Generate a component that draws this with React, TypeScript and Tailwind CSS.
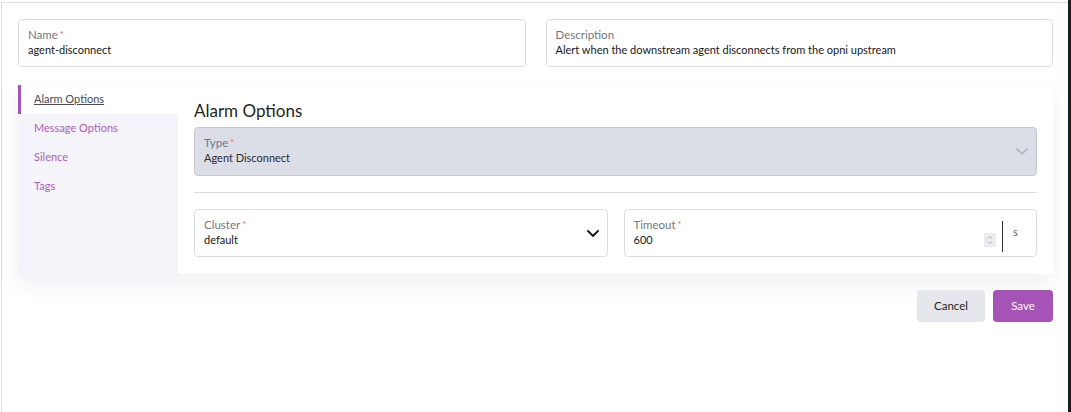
import { FC } from "react";

const Label: FC<{ text: string; required?: boolean; muted?: boolean }> = ({ text, required, muted }) => (
  <div className={`text-[11.5px] leading-[14px] ${muted ? "text-[#707491]" : "text-[#75757f]"}`}>
    {text}
    {required && <span className="text-[#f05a5a] ml-[2px] text-[9px] align-top">*</span>}
  </div>
);

const Chevron: FC<{ className: string; w?: number }> = ({ className, w = 12 }) => (
  <svg width={w} height="7" viewBox="0 0 12 7" className={className} fill="none">
    <path d="M1 1 6 6 11 1" stroke="currentColor" strokeWidth="1.8" strokeLinecap="round" />
  </svg>
);

const tabs = ["Alarm Options", "Message Options", "Silence", "Tags"];

const App: FC = () => {
  return (
    <div className="flex h-[412px] w-full bg-white font-[family-name:Lato,sans-serif] text-[#17171c]">
      <div className="flex-1 mt-[2px] ml-[1px] border-l border-t border-[#dcdee7] pl-4 pr-[15px] pt-4">
        <div className="grid grid-cols-2 gap-5">
          <div className="h-[48px] rounded border border-[#dcdee7] px-[9px] pt-[8px]">
            <Label text="Name" required />
            <div className="text-[11px] leading-[16px]">agent-disconnect</div>
          </div>
          <div className="h-[48px] rounded border border-[#dcdee7] px-[9px] pt-[8px]">
            <Label text="Description" />
            <div className="text-[11px] leading-[16px]">Alert when the downstream agent disconnects from the opni upstream</div>
          </div>
        </div>

        <div className="mt-[18px] flex h-[189px] shadow-[0_10px_22px_rgba(40,40,80,0.07)]">
          <div className="w-[160px] bg-[#f4f4fa]">
            {tabs.map((t, i) =>
              i === 0 ? (
                <div key={t} className="flex h-[29px] items-center border-l-[3px] border-[#a553b7] bg-white pl-[13px] text-[11px] text-[#4a4a55] underline">
                  {t}
                </div>
              ) : (
                <div key={t} className="flex h-[29px] items-center pl-4 text-[11px] text-[#b05cc2]">
                  {t}
                </div>
              )
            )}
          </div>
          <div className="flex-1 bg-white px-4 pt-[14px]">
            <h2 className="text-[17px] leading-[23px] text-[#1f1f24]">Alarm Options</h2>
            <div className="mt-[5px] flex h-[49px] items-center rounded border border-[#c6c8d6] bg-[#dcdee7] pl-[9px] pr-[8px]">
              <div className="flex-1 self-start pt-[8px]">
                <Label text="Type" required muted />
                <div className="text-[11px] leading-[16px] text-[#2b2b33]">Agent Disconnect</div>
              </div>
              <Chevron className="text-[#b4b7c8]" />
            </div>
            <div className="mt-4 h-px bg-[#dcdee7]" />
            <div className="mt-4 grid grid-cols-2 gap-4">
              <div className="flex h-[48px] items-center rounded border border-[#dcdee7] pl-[9px] pr-[8px]">
                <div className="flex-1 self-start pt-[8px]">
                  <Label text="Cluster" required />
                  <div className="text-[11px] leading-[16px]">default</div>
                </div>
                <Chevron className="text-[#111]" />
              </div>
              <div className="flex h-[48px] items-center rounded border border-[#dcdee7] pl-[9px]">
                <div className="flex-1 self-start pt-[8px]">
                  <Label text="Timeout" required />
                  <div className="text-[11px] leading-[16px]">600</div>
                </div>
                <div className="mt-[14px] mr-[6px] flex h-[14px] w-[12px] items-center justify-center rounded-[1px] bg-[#ececf0]">
                  <svg width="6" height="10" viewBox="0 0 6 10" fill="none">
                    <path d="M1 3.5 3 1.5 5 3.5M1 6.5 3 8.5 5 6.5" stroke="#9a9aa5" strokeWidth="0.9" />
                  </svg>
                </div>
                <div className="mt-[6px] h-[31px] w-[1.5px] bg-[#333]" />
                <div className="w-[33px] pl-[10px] text-[11px] text-[#666] -mt-[1px]">s</div>
              </div>
            </div>
          </div>
        </div>

        <div className="mt-4 flex justify-end gap-2">
          <button className="h-[32px] w-[68px] rounded bg-[#e6e6ed] text-[11.5px] text-[#222]">Cancel</button>
          <button className="h-[32px] w-[60px] rounded bg-[#a553b7] text-[11.5px] text-white">Save</button>
        </div>
      </div>
      <div className="w-[3px] bg-[#1b1c21]" />
    </div>
  );
};

export default App;
